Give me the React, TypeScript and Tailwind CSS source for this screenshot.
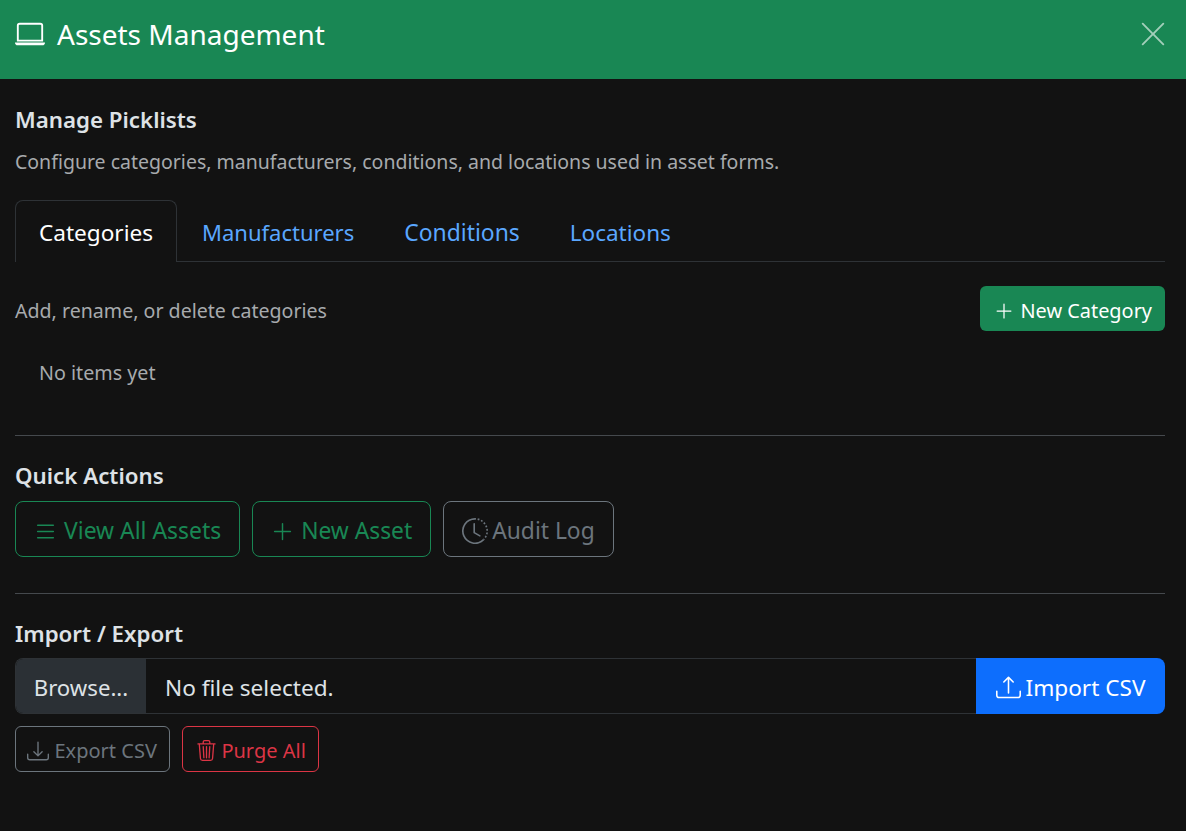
import React from 'react'
import { BsLaptop, BsPlusLg, BsList, BsClockHistory, BsUpload, BsDownload, BsTrash3, BsXLg } from 'react-icons/bs'

const tabs = [
  { label: 'Manufacturers', size: 'text-[22px] pt-[3px]' },
  { label: 'Conditions', size: 'text-[22.9px] pt-[5px]' },
  { label: 'Locations', size: 'text-[22.5px] pt-[4px]' },
]

export default function App() {
  return (
    <div className="min-h-[831px] bg-[#121212] font-['Noto_Sans','Open_Sans',sans-serif] text-[#dee2e6]">
      <header className="h-[79px] bg-[#198754] flex items-center justify-between pl-[15px] pr-[18px] pb-[12px] text-white">
        <h1 className="flex items-center gap-[12px] text-[28px] leading-none">
          <BsLaptop size={30} />
          Assets Management
        </h1>
        <button className="text-white/60">
          <BsXLg size={30} />
        </button>
      </header>

      <main className="pl-[15px] pr-[21px]">
        <h2 className="mt-[27px] text-[22.3px] leading-[28px] font-semibold">Manage Picklists</h2>
        <p className="mt-[14px] text-[19.5px] leading-[28px] text-[#a7aaad]">
          Configure categories, manufacturers, conditions, and locations used in asset forms.
        </p>

        <nav className="mt-[24px] flex h-[62px] border-b border-[#2e3236]">
          <div className="h-[62px] w-[162px] pt-[2px] flex items-center justify-center rounded-t-[8px] border border-b-0 border-[#2e3236] bg-[#121212] text-white text-[22.6px]">
            Categories
          </div>
          {tabs.map((t) => (
            <div key={t.label} className={`px-[25px] flex items-center text-[#5aa7ff] ${t.size}`}>{t.label}</div>
          ))}
        </nav>

        <div className="mt-[24px] flex items-center justify-between h-[45px]">
          <span className="pt-[4px] text-[19.6px] text-[#a7aaad]">Add, rename, or delete categories</span>
          <button className="h-[45px] pl-[14px] pr-[13px] pt-[4px] flex items-center gap-[7px] rounded-[6px] bg-[#198754] text-white text-[19.9px]">
            <BsPlusLg size={20} />
            New Category
          </button>
        </div>

        <p className="mt-[28px] pl-[24px] text-[19.7px] leading-[28px] text-[#a7aaad]">No items yet</p>

        <hr className="mt-[48px] border-[#45494d]" />

        <h2 className="mt-[26px] text-[22.3px] leading-[28px] font-semibold">Quick Actions</h2>
        <div className="mt-[11px] flex gap-[12px]">
          <button className="h-[56px] pl-[17px] pr-[18px] pt-[4px] flex items-center gap-[6px] rounded-[8px] border border-[#198754] text-[#198754] text-[22.9px]">
            <BsList size={25} />
            View All Assets
          </button>
          <button className="h-[56px] pl-[18px] pr-[18px] pt-[4px] flex items-center gap-[7px] rounded-[8px] border border-[#198754] text-[#198754] text-[22.8px]">
            <BsPlusLg size={23} />
            New Asset
          </button>
          <button className="h-[56px] pl-[18px] pr-[18px] pt-[4px] flex items-center gap-[4px] rounded-[8px] border border-[#6c757d] text-[#6c757d] text-[22.8px]">
            <BsClockHistory size={26} />
            Audit Log
          </button>
        </div>

        <hr className="mt-[36px] border-[#45494d]" />

        <h2 className="mt-[26px] text-[22.3px] leading-[28px] font-semibold">Import / Export</h2>
        <div className="mt-[10px] flex h-[56px]">
          <div className="flex-1 flex items-center rounded-l-[8px] border border-r-0 border-[#2e3236] text-[22.6px] overflow-hidden">
            <span className="h-full w-[130px] pt-[3px] flex items-center justify-center bg-[#2b3035] text-[22.2px]">Browse...</span>
            <span className="pl-[19px] pt-[3px]">No file selected.</span>
          </div>
          <button className="w-[189px] pt-[3px] flex items-center justify-center gap-[5px] rounded-r-[8px] bg-[#0d6efd] text-white text-[22.6px]">
            <BsUpload size={25} />
            Import CSV
          </button>
        </div>
        <div className="mt-[12px] flex gap-[12px]">
          <button className="h-[46px] pl-[11px] pr-[12.5px] pt-[3px] flex items-center gap-[5.5px] rounded-[6px] border border-[#6c757d] text-[#6c757d] text-[20px]">
            <BsDownload size={22} />
            Export CSV
          </button>
          <button className="h-[46px] pl-[13px] pr-[12px] pt-[3px] flex items-center gap-[4px] rounded-[6px] border border-[#dc3545] text-[#dc3545] text-[20px]">
            <BsTrash3 size={21} />
            Purge All
          </button>
        </div>
      </main>
    </div>
  )
}
